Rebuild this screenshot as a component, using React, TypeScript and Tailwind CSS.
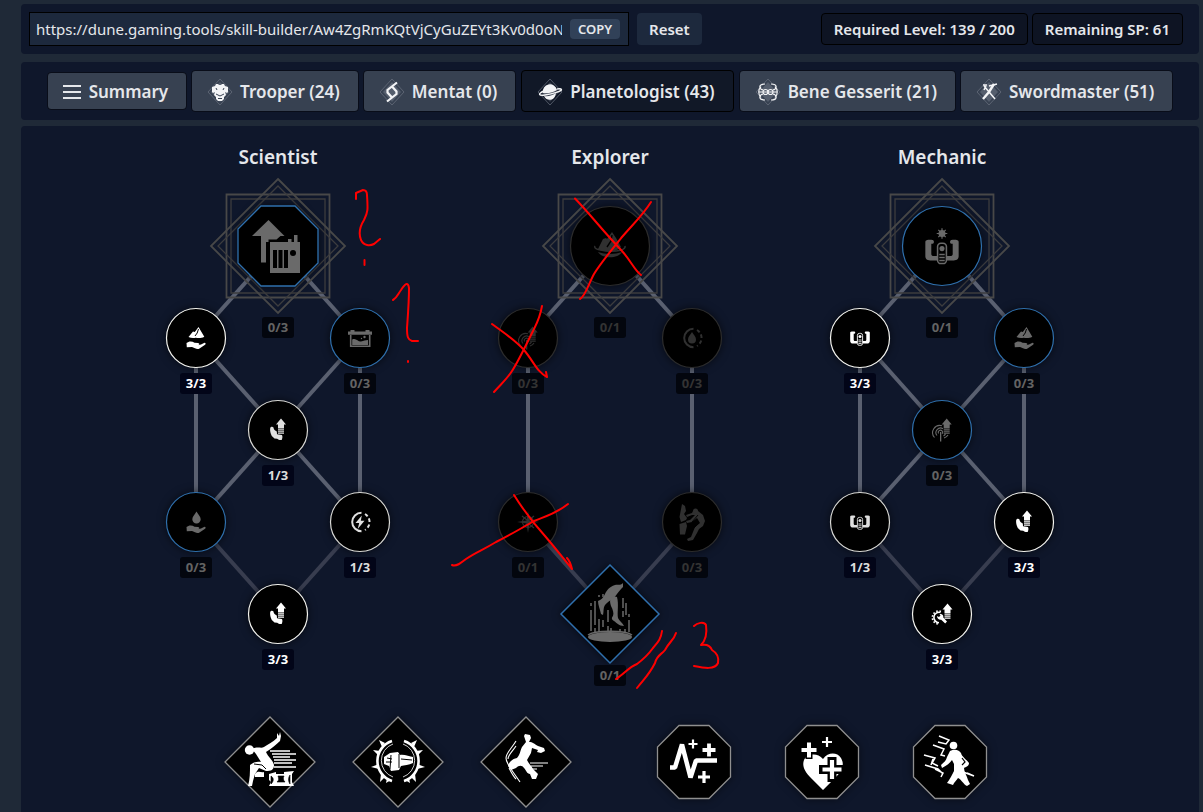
import { FC, ReactNode } from "react";
import clsx from "clsx";

type IconName =
  | "cargo"
  | "mountainHand"
  | "dropHand"
  | "battery"
  | "armUp"
  | "bolt"
  | "dropCircle"
  | "handlebar"
  | "handlebarSun"
  | "radarUp"
  | "gearUp"
  | "compass"
  | "climber"
  | "mountainBowl"
  | "legs";

type Shape = "circle" | "bigCircle" | "octagon" | "diamond";
type State = "full" | "partial" | "open" | "locked";

interface SkillNode {
  x: number;
  y: number;
  shape: Shape;
  state: State;
  icon: IconName;
  points: string;
}

interface Tree {
  name: string;
  lines: [number, number, number, number, boolean][];
  nodes: SkillNode[];
}

const hand = (
  <path d="M-9.500 5C-7 2.800-4 3-1.500 4.700L2 5c2 .3 1.800 2-.2 2.200L5 6.500 8.500 4.700c1.600.2 1.300 1.500.2 2.300L3.500 10.500c-1.500 1-3 .6-4.500-.2L-4 9l-5.200.3z" />
);

const smallArrow = (
  <>
    <path d="M3-11.500 8-5.500H6V-2H0v-3.500h-2z" />
    <path d="M0-.8h6M0 1.200h6M0 3.200h6" stroke="currentColor" strokeWidth="1.300" />
  </>
);

const handlebar = (
  <>
    <path d="M-9.800-5.500c0-1 2-1.300 4.300-1 1 .2 1 2 0 2.300h-.8v6c0 .8.600 1.200 1.400 1.200h2v2.600h-4C-9 5.600-9.800 4.500-9.800 3zM9.800-5.500c0-1-2-1.300-4.300-1-1 .2-1 2 0 2.300h.8v6c0 .8-.6 1.200-1.400 1.200h-2v2.600h4c2.100 0 2.900-1.100 2.900-2.600z" />
    <rect x="-2.600" y="-4.600" width="5.200" height="12" rx="2" fill="none" stroke="currentColor" strokeWidth=".9" />
    <circle cy="-1.400" r="1.500" />
    <path d="M-1.600 2h3.200M-1.600 3.800h3.200M-1.600 5.600h3.200" stroke="currentColor" strokeWidth=".9" />
  </>
);

const ring = (
  <>
    <path d="M1.500-9.300A9.300 9.300 0 1 0 1.500 9.300" fill="none" stroke="currentColor" strokeWidth="2" />
    <path d="M5-8A9.300 9.300 0 0 1 5 8" fill="none" stroke="currentColor" strokeWidth="2" strokeDasharray="3.500 2.500" />
  </>
);

const icons: Record<IconName, ReactNode> = {
  cargo: (
    <>
      <path d="M-9.500-26 6.500-10H2.500l-4 3.500h-8V-4h-2.500v20.500h-5V-10h-9z" />
      <path d="M-8-4H10v-3h3.500v3h2.500v-7h3.500v7H22v31H-8z" />
      <path d="M-5 4h4v18h-4zM.5 4h4v18h-4zM6 4h4v18H6z" fill="#000" />
      <circle cx="15" cy="7" r="3" fill="#000" />
    </>
  ),
  mountainHand: (
    <>
      <path d="M-7.500-1-3-6.500-1.200-6 2.500-11l5.800 9.700c-3 1.700-6 1.600-8.500 1-2.500.7-5 .4-7.300-.7z" />
      <path d="m2.500-9-1.300 4-2.200 3" fill="none" stroke="#000" strokeWidth="1" />
      {hand}
    </>
  ),
  dropHand: (
    <>
      <path d="M.5-10.500C2-7.500 4.700-5.500 4.700-2.800a4.200 4.200 0 0 1-8.400 0C-3.700-5.500-1-7.500.5-10.500z" />
      {hand}
    </>
  ),
  battery: (
    <>
      <path d="M-9.500-8h4v1.500h11V-8h4v1.500H12v3.300h-24v-3.300h2.500z" />
      <path d="M-9.300-3V8.300H9.700V-3" fill="none" stroke="currentColor" strokeWidth="1.600" />
      <path d="M-7.800 1.500C-4-.5-2 4 1 3.500S5 2 8 2v5H-7.800z" />
      <circle cx="4.500" cy="-1" r="1.200" />
      <circle cx="1.500" cy=".5" r=".7" />
    </>
  ),
  armUp: (
    <>
      {smallArrow}
      <path d="M-7.800-2c.5-1.300 2.300-1.600 3.300-.6C-4.500-.8-2.800.6-1.200 1.500l.2 2.800L4 5c.8 1.600.4 3.300-.3 5-1.800.3-3.300-.2-4.500-1.300L-3.500 8.500-6.200 6C-7.500 3.500-8.200.5-7.800-2z" />
    </>
  ),
  bolt: (
    <>
      {ring}
      <path d="M1.800-6.500-4.500 1h3.700l-1.500 6L4.500-1.300H.8z" />
    </>
  ),
  dropCircle: (
    <>
      {ring}
      <path d="M0-6c1.600 3 4 4.800 4 7.500a4 4 0 0 1-8 0C-4-1.200-1.600-3 0-6z" />
    </>
  ),
  handlebar: handlebar,
  handlebarSun: (
    <>
      <g transform="translate(0 5) scale(1.700)">{handlebar}</g>
      <circle cy="-12.500" r="3.500" />
      <path d="M0-17.800v10.600M-5.300-12.500H5.300M-3.700-16.200l7.400 7.400M3.700-16.200l-7.400 7.400" stroke="currentColor" strokeWidth="1.200" />
    </>
  ),
  radarUp: (
    <>
      <g transform="translate(1.700 0)">{smallArrow}</g>
      <g fill="none" stroke="currentColor" strokeWidth="1.100">
        <path d="M-7.500 7.500A7.200 7.200 0 0 1 0-4.200" />
        <path d="M-5 5.500A4.600 4.600 0 0 1 1-1.300M1.500 6A4.600 4.600 0 0 0 3.500 3.800" />
        <path d="M-3.500 3.500a2.200 2.200 0 1 1 3.600.4M2 8a7 7 0 0 0 4-3" />
      </g>
      <path d="M-2 2h1.300v9.500H-2z" />
    </>
  ),
  gearUp: (
    <>
      <g transform="translate(2.500 1)">{smallArrow}</g>
      <path
        d="M-1.500-1.500A5.200 5.200 0 1 0-3 8.700"
        fill="none"
        stroke="currentColor"
        strokeWidth="1.600"
      />
      <path
        d="M-1-2.600A6.500 6.500 0 1 0-2.500 10"
        fill="none"
        stroke="currentColor"
        strokeWidth="1.600"
        strokeDasharray="1.600 1.700"
      />
      <path d="m-5 2 2 1 1.500-1.500L-2.500 0C0-.5 1.700 1 1.300 3.500l3.700 4L3.200 9.500-.8 5.700C-3 6-5 4.500-5 2z" />
    </>
  ),
  compass: (
    <>
      <circle r="5.500" fill="none" stroke="currentColor" strokeWidth="1.200" />
      <path d="M0-11 1.500-1.500 11 0 1.500 1.500 0 11-1.500 1.500-11 0l9.500-1.500z" />
      <path d="m-6-6 5 4M6-6 1-2M-6 6l5-4M6 6 1 2" stroke="currentColor" strokeWidth="1.200" />
    </>
  ),
  climber: (
    <>
      <path d="M-10-18-7-16-6-11-8-8-5-4-6-2-11 0-12.500-5zM-12.500 2-6 0-5 4-7 12.500h-5z" />
      <path d="M-6-7 0-9 1-11 6-11 11-7 13-1 11 4 7 7 5 11 1 18-4 19-5 17-1 15 1 10 3 5 8 1 5-4 0 0-5 1-6-1-2-2 3-7 0-7-5-5z" />
      <path d="m6-7-6 7 7 1-5 5" fill="none" stroke="#000" strokeWidth=".9" />
      <circle cx="3.500" cy="-11" r="2.500" />
    </>
  ),
  mountainBowl: (
    <>
      <path d="m-12 3 5-10 3-1 1 1 5-7 4 6 5 9C5 7-5 7-12 3z" />
      <path d="m2-11-1 6-4 6" fill="none" stroke="#000" strokeWidth="1.400" />
      <path d="M-15 0C-19 6 17 8 15 0" fill="none" stroke="currentColor" strokeWidth="1.500" />
      <path d="M-12 6C-5 8.500 5 8.500 12 6 8 13-8 13-12 6z" />
    </>
  ),
  legs: (
    <>
      <path d="M13-31C10-28 8-30 5-29-1-27-3-24-5-20-7-16-9-14-12-13-12-9-10-5-9 0l2 1C-6-3-7-6-5-9-2-13 3-14 7-20c2-3 4-5 6-7z" />
      <path d="M3-18C-1-15 0-12 1-8 3-4 4-1 3 2 1 4 2 6 4 7 7 9 9 12 14 12 13 9 9 7 8 4 7-1 9-10 7-17z" />
      <path d="M-22 21c6-5 38-5 44 0" fill="none" stroke="currentColor" strokeWidth="1.500" />
      <ellipse cy="23" rx="22" ry="5" />
      <path
        d="M-19-11v3M-19-4v21M-15-13v24M-15 14v4M-11-19v2M-11 5v13M-7-20v3M-7 6v7M-2-4v12M-2 12v6M1 14v4M13-16v10M13-3v6M16-11v12M19 0v3M19 6v12M10 15v3M15 15v3"
        stroke="currentColor"
        strokeWidth="1.500"
      />
    </>
  ),
};

const trees: Tree[] = [
  {
    name: "Scientist",
    lines: [
      [166, 76, 84, 168, true],
      [166, 76, 248, 168, true],
      [84, 168, 166, 260, true],
      [248, 168, 166, 260, true],
      [84, 168, 84, 352, true],
      [248, 168, 248, 352, true],
      [166, 260, 84, 352, true],
      [166, 260, 248, 352, true],
      [84, 352, 166, 444, false],
      [248, 352, 166, 444, false],
    ],
    nodes: [
      { x: 166, y: 76, shape: "octagon", state: "open", icon: "cargo", points: "0/3" },
      { x: 84, y: 168, shape: "circle", state: "full", icon: "mountainHand", points: "3/3" },
      { x: 248, y: 168, shape: "circle", state: "open", icon: "battery", points: "0/3" },
      { x: 166, y: 260, shape: "circle", state: "partial", icon: "armUp", points: "1/3" },
      { x: 84, y: 352, shape: "circle", state: "open", icon: "dropHand", points: "0/3" },
      { x: 248, y: 352, shape: "circle", state: "partial", icon: "bolt", points: "1/3" },
      { x: 166, y: 444, shape: "circle", state: "full", icon: "armUp", points: "3/3" },
    ],
  },
  {
    name: "Explorer",
    lines: [
      [166, 76, 84, 168, true],
      [166, 76, 248, 168, true],
      [84, 168, 84, 352, true],
      [248, 168, 248, 352, true],
      [84, 352, 166, 444, false],
      [248, 352, 166, 444, false],
    ],
    nodes: [
      { x: 166, y: 76, shape: "bigCircle", state: "locked", icon: "mountainBowl", points: "0/1" },
      { x: 84, y: 168, shape: "circle", state: "locked", icon: "radarUp", points: "0/3" },
      { x: 248, y: 168, shape: "circle", state: "locked", icon: "dropCircle", points: "0/3" },
      { x: 84, y: 352, shape: "circle", state: "locked", icon: "compass", points: "0/1" },
      { x: 248, y: 352, shape: "circle", state: "locked", icon: "climber", points: "0/3" },
      { x: 166, y: 444, shape: "diamond", state: "open", icon: "legs", points: "0/1" },
    ],
  },
  {
    name: "Mechanic",
    lines: [
      [166, 76, 84, 168, true],
      [166, 76, 248, 168, true],
      [84, 168, 166, 260, true],
      [248, 168, 166, 260, true],
      [84, 168, 84, 352, true],
      [248, 168, 248, 352, true],
      [166, 260, 84, 352, true],
      [166, 260, 248, 352, true],
      [84, 352, 166, 444, false],
      [248, 352, 166, 444, false],
    ],
    nodes: [
      { x: 166, y: 76, shape: "bigCircle", state: "open", icon: "handlebarSun", points: "0/1" },
      { x: 84, y: 168, shape: "circle", state: "full", icon: "handlebar", points: "3/3" },
      { x: 248, y: 168, shape: "circle", state: "open", icon: "mountainHand", points: "0/3" },
      { x: 166, y: 260, shape: "circle", state: "open", icon: "radarUp", points: "0/3" },
      { x: 84, y: 352, shape: "circle", state: "partial", icon: "handlebar", points: "1/3" },
      { x: 248, y: 352, shape: "circle", state: "full", icon: "armUp", points: "3/3" },
      { x: 166, y: 444, shape: "circle", state: "full", icon: "gearUp", points: "3/3" },
    ],
  },
];

const borders: Record<State, string> = {
  full: "#f5f5f0",
  partial: "#d8d8d4",
  open: "#2f70ad",
  locked: "#2c2c2c",
};

const NodeShape: FC<{ shape: Shape; stroke: string }> = ({ shape, stroke }) => {
  if (shape === "octagon") {
    return <path d="M-17-40h34L40-17v34L17 40h-34L-40 17v-34z" fill="#000" stroke={stroke} strokeWidth="1.300" />;
  }
  if (shape === "diamond") {
    return <path d="M0-49 49 0 0 49-49 0z" fill="#000" stroke={stroke} strokeWidth="1.500" />;
  }
  return <circle r={shape === "bigCircle" ? 39.5 : 29.5} fill="#000" stroke={stroke} strokeWidth="1.200" />;
};

const Node: FC<{ node: SkillNode; tree: string }> = ({ node, tree }) => {
  const { shape, state } = node;
  const half = shape === "circle" ? 30 : shape === "diamond" ? 50 : 40;
  return (
    <button
      type="button"
      aria-label={`${tree} ${node.icon} ${node.points}`}
      className="absolute cursor-pointer"
      style={{ left: node.x - half, top: node.y - half, width: half * 2, height: half * 2 }}
    >
      <svg
        viewBox={`${-half} ${-half} ${half * 2} ${half * 2}`}
        fill="currentColor"
        className={clsx(
          "size-full overflow-visible drop-shadow-[0_0_4px_rgba(0,0,0,0.6)]",
          state === "full" && "text-white",
          state === "partial" && "text-[#e0e0e0]",
          state === "open" && "text-[#6a6a6a]",
          state === "locked" && "text-[#303030]"
        )}
      >
        <NodeShape shape={shape} stroke={borders[state]} />
        {icons[node.icon]}
      </svg>
      <span
        className={clsx(
          "absolute inset-x-0 top-full flex justify-center",
          shape === "circle" && "mt-[5px]",
          shape === "diamond" && "mt-px",
          (shape === "bigCircle" || shape === "octagon") && "mt-[31px]"
        )}
      >
        <span
          className={clsx(
            "rounded-[3px] px-1.5 text-[13px] leading-[21px] font-bold",
            state === "full" && "bg-[#020518] text-white",
            state === "partial" && "bg-[#020518] text-[#dcdcdc]",
            state === "open" && "bg-[#03060e] text-[#636363]",
            state === "locked" && "bg-[#03060e] text-[#333333]"
          )}
        >
          {node.points}
        </span>
      </span>
    </button>
  );
};

const SkillTree: FC<{ tree: Tree }> = ({ tree }) => (
  <section className="w-[332px]">
    <h2 className="text-center text-[19px] leading-[26px] font-semibold">{tree.name}</h2>
    <div className="relative h-[530px]">
      <svg viewBox="0 0 332 530" className="size-full" fill="none">
        {tree.lines.map(([x1, y1, x2, y2, bright], i) => (
          <line key={i} x1={x1} y1={y1} x2={x2} y2={y2} stroke={bright ? "#5a6070" : "#383d4f"} strokeWidth="4" />
        ))}
        <g transform="translate(166 76)" stroke="#484848">
          <path d="M-51.500-51.500h103v103h-103z" strokeWidth="1.800" />
          <path d="M-47-47h94v94h-94z" stroke="#3c3c3e" strokeWidth="1.300" />
          <path d="M0-67 67 0 0 67-67 0z" strokeWidth="1.800" />
          <path d="M0-60 60 0 0 60-60 0z" stroke="#3c3c3e" strokeWidth="1.300" />
        </g>
      </svg>
      {tree.nodes.map((node) => (
        <Node key={`${node.x}-${node.y}`} node={node} tree={tree.name} />
      ))}
    </div>
  </section>
);

// Freehand notes drawn over the trees
const Notes: FC = () => (
  <svg
    viewBox="112 144 996 556"
    className="pointer-events-none absolute inset-0 size-full"
    fill="none"
    stroke="#ff0000"
    strokeWidth="2"
    strokeLinecap="round"
    strokeLinejoin="round"
  >
    <path d="M356 199v-6l7-3c3 0 4 2 4 5 1 15 1 17-3 25-5 8-5 15-3 20 3 6 9 6 13 4l6-5M364.500 260v5" />
    <path d="M393 300c4-2 5-6 8-10 4-6 7-9 8-2 0 14-1 26-2 40 0 9 1 12 5 13h6M408 361v1" />
    <path d="M575 198.500C590 214 602 230 622 251c9 10 13 20 19 24M651 202c-8 13-17 21-29 35-13 16-22 27-28 37-5 9-9 23-14 25" />
    <path d="M492 324c12 9 22 15 32 26 10 12 13 22 23 27l-1-5M542 306c-2 12-5 17-9 25-9 18-15 31-21 40-5 8-11 13-18 21" />
    <path d="M514 495c10 16 21 30 31 41 11 13 18 22 27 33-1-4-2-8-5-11M452 565c4 2 9-2 14-6 10-7 17-9 30-17 14-7 26-14 38-21 9-4 20-6 34-17" />
    <path d="M662 631c-1 8-4 11-9 17-5 7-12 13-16 16-8 3-13 10-21 15M676 633c-2 7-7 9-11 17-4 5-8 5-10 13-6 12-11 16-18 25" />
    <path d="M694 626c3-3 10-5 12-1 1 7 0 15-5 20 5-1 9 0 11 5 5 3 7 8 6 13-3 7-14 5-24 3" />
  </svg>
);

const plus = (x: number, y: number, s: number, w: number) => (
  <path d={`M${x - s} ${y}h${s * 2}M${x} ${y - s}v${s * 2}`} stroke="currentColor" strokeWidth={w} />
);

const abilities: { name: string; shape: "diamond" | "octagon"; art: ReactNode }[] = [
  {
    name: "Suspensor Dash",
    shape: "diamond",
    art: (
      <>
        <circle cx="-20.500" cy="-12" r="4.700" />
        <path d="M-18-13C-12-16-9-13-6-15-2-18 3-20 7-24L7-29 9-26 10-30 11-26 10-21C6-17 2-14-4-10-2-5 3-2 4 3 4 8 1 9-4 9L-11 6-15 12-17 19-18 24-22 24C-20 17-20 10-20 3-17 0-12-1-9 0L-14-8z" />
        <path d="M-15 12C-12 8-9 11-6 10v5h-9z" />
        <path d="m-16 2 8 1 4 4" fill="none" stroke="#000" strokeWidth="1" />
        <path d="M-1 12 6 10v2h8v-2l10-1-2 3v8l2 4H-1l2-4-2-2z" />
        <path d="M1 14c3 2 3 5 0 8zM8 14c1 3 1 4-1 6h8c-2-2-2-4-1-6zM20 13c-2 3-2 6 0 9z" fill="#000" stroke="#000" strokeWidth=".6" />
        <path d="M0-11h20M2-8h24M3-5h17M4-2h22M4 1h18M4 5h22" stroke="currentColor" strokeWidth="1.500" />
      </>
    ),
  },
  {
    name: "Suspensor Blast",
    shape: "diamond",
    art: (
      <>
        <path d="M-6-21A21 21 0 0 0-6 19M6-21a21 21 0 0 1 0 40" fill="none" stroke="currentColor" strokeWidth="2.600" />
        <path d="M-5-18a17.500 17.500 0 0 0 0 33M5-18a17.500 17.500 0 0 1 0 33" fill="none" stroke="currentColor" strokeWidth=".8" />
        <path d="m-19-22 6 3-3 4zM19-22l-6 3 3 4zM-25-12l7 1-2 4zM25-12l-7 1 2 4zM-27 5l8-3v5zM27 5l-8-3v5zM-18 20l1-8 4 3zM18 20l-1-8-4 3zM-12 21l1-5 4 2zM12 21l-1-5-4 2z" />
        <path d="M-14-5-8-9 0-10 2-7C6-8 12-5 15-5v6C11 3 6 3 3 4L1 8-7 9-9 4-14 2z" />
        <path d="M1-8v14M-7-7l-1 14M-11-4l5 1M-12 0h6M3-3l11 1" stroke="#000" strokeWidth="1" />
      </>
    ),
  },
  {
    name: "Suspensor Leap",
    shape: "diamond",
    art: (
      <>
        <path d="M-2-26-1-28 4-27 5-24 3-20C7-20 8-18 12-16L18-14 19-11 15-9 11-10 12-12 6-14 5-9 1-2C2 1 5 3 7 7L12 12 10 17 6 17 4 12C1 12 0 8-2 6-4 3-7 3-10 6L-15 8-18 4C-17 0-14-3-9-4-6-7-6-11-4-15L0-20z" />
        <path d="M-10-21C-14-14-20-9-20-4-20 2-14 8-6 20M-10-16c-4 6-8 9-8 13M-17 6c3 6 5 9 7 11" fill="none" stroke="currentColor" strokeWidth="1.100" />
        <path d="M4 1h18M5 4h12M6 7h5" stroke="currentColor" strokeWidth="1.200" />
      </>
    ),
  },
  {
    name: "Vitality",
    shape: "octagon",
    art: (
      <>
        <path d="M-24 5.500h5l7-23 8.500 33 5.500-17h21" fill="none" stroke="currentColor" strokeWidth="4.500" strokeLinejoin="bevel" />
        {plus(-1, -18, 4.5, 2.2)}
        {plus(15, -12, 6.5, 3.8)}
        {plus(10, 15, 6, 3.2)}
      </>
    ),
  },
  {
    name: "Healing",
    shape: "octagon",
    art: (
      <>
        <path d="M1 28-12 15C-18 9-20 3-18-2c3-6 13-8 19-1 5-7 14-7 18-1 4 7 1 13-5 19z" />
        <path d="M10-5v25M-3 7.500h26" stroke="#000" strokeWidth="9" />
        {plus(10, 7.5, 9.5, 4.2)}
        <path d="M-13-21v18M-22-12h18" stroke="#000" strokeWidth="7" />
        {plus(-13, -12, 7.5, 4)}
        {plus(5, -20, 5, 2.2)}
      </>
    ),
  },
  {
    name: "Endurance",
    shape: "octagon",
    art: (
      <>
        <circle cx="3.500" cy="-16.500" r="3.800" />
        <path d="M0-11C4-13 8-13 11-9 12-5 16-3 19 1 19 4 16 5 14 6 14 10 17 14 18 18l2 4-3 2C13 22 12 18 8 16 7 18 4 20 3 23L-3 21C0 17 2 13 4 9L4 2 2-2C0 1-4 4-8 6L-9 3C-6 0-4-1-3-5z" />
        <path d="m12-4 3 4-3 3" fill="none" stroke="#000" strokeWidth="1.200" />
        <path
          d="m-11-26 10 4-3 4-8-2M-17-17l11 4-3 6 4 1M-26-7l11 3-3 5 6 3M-25 3l13 4 4 4M-15 7l8 4-2 4M-17-3l-2 6M13 10l11 4-7-3"
          fill="none"
          stroke="currentColor"
          strokeWidth="1.500"
        />
      </>
    ),
  },
];

const Ability: FC<{ ability: (typeof abilities)[number] }> = ({ ability }) => (
  <button type="button" aria-label={ability.name} className="flex w-32 cursor-pointer justify-center">
    <svg viewBox="-46 -46 92 92" className="size-[92px] drop-shadow-[0_0_4px_rgba(0,0,0,0.5)]" fill="currentColor">
      <path
        d={ability.shape === "diamond" ? "M0-45 45 0 0 45-45 0z" : "M-15-36.500h30L36.500-15v30L15 36.500h-30L-36.500 15v-30z"}
        fill="#000"
        stroke="#8f8f8f"
        strokeWidth="1.300"
      />
      {ability.art}
    </svg>
  </button>
);

const tabs: { label: string; active?: boolean; art: ReactNode }[] = [
  {
    label: "Trooper (24)",
    art: (
      <>
        <path d="M-4-8h2l1 1h2l1-1h2l1 2 3 1V0L7 1 5 0l1 3-2 2v2L2 9h-4l-2-2V5l-2-2 1-3-2 1-1-1v-5l3-1z" />
        <path d="M-4 2 0 4l4-2M-2 6.500h4M-4-4l1 2M4-4 3-2" fill="none" stroke="#374151" strokeWidth="1" />
      </>
    ),
  },
  {
    label: "Mentat (0)",
    art: (
      <path
        d="M5-9.500-4.500-2v2.500l4.500 5M-5 9.500 4.500 2V-.5L0-5.500"
        fill="none"
        stroke="currentColor"
        strokeWidth="2.200"
      />
    ),
  },
  {
    label: "Planetologist (43)",
    active: true,
    art: (
      <>
        <path d="M-7 1a7 7 0 0 1 14-3C4 0-2 2-7 1zM-6 4c4 1 9-1 12-3-1 8-9 9-12 3z" />
        <path d="M-6-1c-7 3-5 5 1 4S14-1 11-3c-1-.5-2-.3-4 0" fill="none" stroke="currentColor" strokeWidth="1.500" />
      </>
    ),
  },
  {
    label: "Bene Gesserit (21)",
    art: (
      <g fill="none" stroke="currentColor" strokeWidth="1.200">
        <path d="M-3-8c-7 0-6 5-2 6M3-8c7 0 6 5 2 6M-3 8c-7 0-6-5-2-6M3 8c7 0 6-5 2-6M-7-5c-3 2-3 8 0 10M7-5c3 2 3 8 0 10M-9 0H9" />
        <circle cx="-2.500" r="2.500" />
        <circle cx="2.500" r="2.500" />
      </g>
    ),
  },
  {
    label: "Swordmaster (51)",
    art: (
      <>
        <path d="m-6 7 6-7 5-8" fill="none" stroke="currentColor" strokeWidth="2.400" />
        <path d="m-5-6 11 13M-6-7h4M-5-2l2-4M0-6l8-2" fill="none" stroke="currentColor" strokeWidth="1.500" />
      </>
    ),
  },
];

const App: FC = () => {
  return (
    <div className="flex min-h-screen flex-col bg-[#1f2937] pt-1 pr-1 pl-[21px] font-['Noto_Sans',sans-serif] text-gray-200">
      <header className="flex items-center rounded bg-slate-900 py-2 pr-4 pl-2">
        <div className="flex h-[34px] w-[600px] min-w-0 items-center border border-black bg-slate-800 pr-2 pl-1.5">
          <input
            type="text"
            readOnly
            aria-label="Build link"
            defaultValue="https://dune.gaming.tools/skill-builder/Aw4ZgRmKQtVjCyGuZEYt3Kv0d0oNxR8b"
            className="mr-2 min-w-0 flex-1 bg-transparent text-[15px] leading-6 outline-none"
          />
          <button type="button" className="rounded-sm bg-slate-700 px-2 text-[13px] leading-5 font-semibold">
            COPY
          </button>
        </div>
        <button type="button" className="ml-2 rounded bg-slate-800 px-3 text-[15px] leading-8 font-semibold">
          Reset
        </button>
        <div className="ml-auto flex gap-1 text-[15px] leading-[30px] font-semibold whitespace-nowrap">
          <div className="rounded border border-black bg-[#0e1423] px-3">Required Level: 139 / 200</div>
          <div className="rounded border border-black bg-[#0e1423] px-3">Remaining SP: 61</div>
        </div>
      </header>

      <nav className="mt-2 flex items-center justify-center gap-1.5 rounded bg-slate-900 py-2 text-[17px] font-semibold whitespace-nowrap">
        <button
          type="button"
          className="flex h-9 items-center rounded-[3px] bg-[#374151] pt-px pr-[18px] pl-[15px] outline outline-black/40"
        >
          <svg viewBox="0 0 18 16" className="mr-2 h-4 w-[18px]" stroke="currentColor" strokeWidth="2">
            <path d="M0 2h18M0 8h18M0 14h18" />
          </svg>
          Summary
        </button>
        {tabs.map((tab) => (
          <button
            key={tab.label}
            type="button"
            className={clsx(
              "flex items-center pt-px pr-[18px] pl-[15px]",
              tab.active
                ? "h-[42px] rounded border border-black bg-[#111827]"
                : "h-10 rounded-[3px] bg-[#374151] outline outline-black/40"
            )}
          >
            <svg viewBox="-13 -13 26 26" className="mr-[7px] size-[26px] overflow-visible text-gray-100" fill="currentColor">
              <path d="M0-13 12 0 0 13-12 0z" fill="none" stroke="#6b7280" strokeOpacity=".7" />
              <path d="M0-10 9 0 0 10-9 0z" fill="#9ca3af" fillOpacity=".3" />
              {tab.art}
            </svg>
            {tab.label}
          </button>
        ))}
      </nav>

      <main className="mt-1.5 flex-1 rounded-t bg-slate-900 pt-[18px] pb-1">
        <div className="relative mx-auto flex w-[996px]">
          {trees.map((tree) => (
            <SkillTree key={tree.name} tree={tree} />
          ))}
          <Notes />
        </div>
        <div className="mt-4 flex justify-center gap-10 text-white">
          <div className="flex">
            {abilities.slice(0, 3).map((ability) => (
              <Ability key={ability.name} ability={ability} />
            ))}
          </div>
          <div className="flex">
            {abilities.slice(3).map((ability) => (
              <Ability key={ability.name} ability={ability} />
            ))}
          </div>
        </div>
      </main>
    </div>
  );
};

export default App;
